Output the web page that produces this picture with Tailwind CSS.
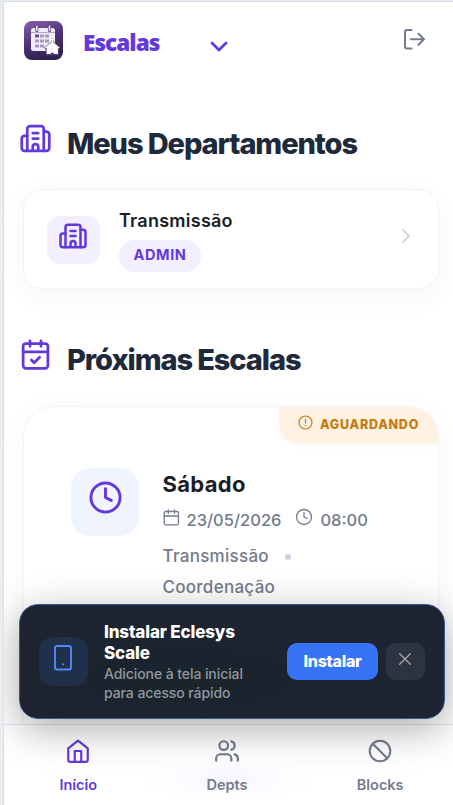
<!DOCTYPE html>
<html lang="pt-BR">
<head>
<meta charset="utf-8">
<meta name="viewport" content="width=device-width, initial-scale=1">
<title>Escalas</title>
<script src="https://cdn.jsdelivr.net/npm/@tailwindcss/browser@4"></script>
</head>
<body class="h-[805px] overflow-hidden bg-[#e8edf3] pt-px pl-[3px] font-['Inter',sans-serif]">
<svg class="hidden">
  <symbol id="building" viewBox="0 0 24 24" fill="none" stroke="currentColor" stroke-width="2" stroke-linecap="round" stroke-linejoin="round"><path d="M10 12h4M10 8h4M14 21v-3a2 2 0 0 0-4 0v3M6 10H4a2 2 0 0 0-2 2v7a2 2 0 0 0 2 2h16a2 2 0 0 0 2-2V9a2 2 0 0 0-2-2h-2"/><path d="M6 21V5a2 2 0 0 1 2-2h8a2 2 0 0 1 2 2v16"/></symbol>
  <symbol id="clock" viewBox="0 0 24 24" fill="none" stroke="currentColor" stroke-linecap="round" stroke-linejoin="round"><circle cx="12" cy="12" r="10"/><path d="M12 6v6l4 2"/></symbol>
</svg>
<div class="relative h-[804px] w-[450px] overflow-hidden border-t border-l border-[#d9dee6] bg-white">
  <header class="flex h-[75px] items-start pt-[19px] pl-5">
    <svg class="size-[39px] shrink-0" viewBox="0 0 39 39">
      <defs><linearGradient id="lg" x1="0" y1="0" x2=".35" y2="1"><stop stop-color="#8961ad"/><stop offset=".48" stop-color="#57387f"/><stop offset="1" stop-color="#30224f"/></linearGradient></defs>
      <rect width="39" height="39" rx="8" fill="url(#lg)"/>
      <rect x="7" y="7" width="24" height="23" rx="2.5" fill="#f1edf8"/>
      <path d="M7 11.5h24" stroke="#a58fc0" stroke-width=".8"/>
      <path d="M12.8 5v4.5M25.5 5v4.5" stroke="#68478c" stroke-width="3.2" stroke-linecap="round"/>
      <path d="M12.8 5.2v4M25.5 5.2v4" stroke="#f1edf8" stroke-width="1.6" stroke-linecap="round"/>
      <g fill="#a99ac2"><path d="M16 13.5h4v3h-4zM21 13.5h4v3h-4zM11 18.5h4v3h-4zM16 18.5h4v3h-4zM21 18.5h4v3h-4zM11 23.5h4v3h-4zM16 23.5h4v3h-4z"/><path d="M11 13.5h4v3h-4z" fill="#684c8e"/></g>
      <path d="M28.3 17v5M20.8 27.5l7.5-6 7.3 6M23 26.5h10.5V33H23z" fill="#fff" stroke="#56407c" stroke-width="2.6"/>
      <path d="M28.3 16.5v6M26.3 18.6h4M21.3 27l7-5.5 6.8 5.5" fill="none" stroke="#fff" stroke-width="1.5"/>
      <path d="M22.7 26.5V33h4v-3.5c0-2.2 3.2-2.2 3.2 0V33h4v-6.5L28.3 22z" fill="#fff"/>
    </svg>
    <div class="ml-[20px] w-[127px] pt-[8px] font-['Noto_Sans',sans-serif] text-[22.5px] leading-[28px] font-black tracking-[-.95px] whitespace-nowrap text-[#6339dc]">Escalas</div>
    <svg class="mt-[20px] h-[12px] w-[18px]" viewBox="0 0 18 12" fill="none" stroke="#6339dc" stroke-width="2.8" stroke-linecap="round" stroke-linejoin="round"><path d="m2 2 7 7 7-7"/></svg>
    <svg class="mt-[8px] ml-[176px] size-[21px]" viewBox="0 0 21 21" fill="none" stroke="#737b8c" stroke-width="2" stroke-linecap="round" stroke-linejoin="round"><path d="M7.5 1H3Q1 1 1 3v14.5q0 2 2 2h4.5M7 10.3h13M14.5 4.8l5.500 5.500-5.500 5.500"/></svg>
  </header>

  <main class="pl-[19px]">
    <h2 class="mt-[48px] -ml-[4px] flex h-[37px] items-center text-[29px] leading-[36px] font-extrabold tracking-[-1.090px] whitespace-nowrap text-[#1e293b]">
      <svg class="-mt-[10px] mr-[14px] size-[33px] text-[#6339dc]"><use href="#building"/></svg>
      <span class="ml-px">Meus Departamentos</span>
    </h2>
    <section class="mt-[27px] flex h-[100px] w-[416px] items-start rounded-[20px] border border-[#f1f2f4] bg-white pl-[22.500px] shadow-[0_8px_30px_rgba(0,0,0,0.045)]">
      <div class="mt-[26px] flex h-[48px] w-[53px] justify-center rounded-[13px] bg-[#f3efff] pt-[5px] text-[#6339dc]"><svg class="size-[30px]"><use href="#building"/></svg></div>
      <div class="mt-[18px] ml-[19.500px] w-[282.500px]">
        <div class="text-[18px] leading-[25px] font-semibold tracking-[.25px] text-[#1b1e28]">Transmissão</div>
        <div class="mt-[7px] flex h-[32px] w-[82px] items-center justify-center rounded-full bg-[#f3efff] pb-[2px] text-[14.500px] font-bold tracking-[.6px] text-[#6339dc]">ADMIN</div>
      </div>
      <svg class="mt-[39px] h-[14px] w-[8px]" viewBox="0 0 8 14" fill="none" stroke="#d3d6dc" stroke-width="1.800" stroke-linecap="round" stroke-linejoin="round"><path d="m1 1 6 6-6 6"/></svg>
    </section>

    <h2 class="mt-[52px] -ml-[4px] flex h-[37px] items-center text-[29px] leading-[36px] font-extrabold tracking-[-1.090px] whitespace-nowrap text-[#1e293b]">
      <svg class="-mt-[10px] mr-[14px] size-[33px]" viewBox="0 0 24 24" fill="none" stroke="#6339dc" stroke-width="2" stroke-linecap="round" stroke-linejoin="round"><path d="M8 2v4M16 2v4M3 10h18m-12 6 2 2 4-4"/><rect x="3" y="4" width="18" height="18" rx="2"/></svg>
      <span class="ml-px">Próximas Escalas</span>
    </h2>
    <section class="mt-[28px] h-[460px] w-[416px] overflow-hidden rounded-[30px] border border-[#f3f4f6] bg-white shadow-[0_4px_30px_rgba(0,0,0,0.035)]">
      <div class="ml-auto flex h-[36px] w-[159px] items-center rounded-bl-[19px] bg-[#fff2e3] pl-[19px] text-[#c77a0c] shadow-[0_2px_8px_rgba(0,0,0,0.03)]">
        <svg class="-mt-[6px] size-[15px]" viewBox="0 0 15 15" fill="none" stroke="currentColor" stroke-width="1.200" stroke-linecap="round"><circle cx="7.500" cy="7.500" r="6.500"/><path d="M7.500 4.500v3.500M7.500 10.300v.1"/></svg>
        <span class="ml-[7px] text-[12.500px] font-extrabold tracking-[.75px]">AGUARDANDO</span>
      </div>
      <div class="flex pt-[25px] pl-[47px]">
        <div class="flex size-[68px] shrink-0 justify-center rounded-[19px] bg-[#eff4ff] pt-[12px] text-[#6339dc]"><svg class="size-[35px]" stroke-width="2"><use href="#clock"/></svg></div>
        <div class="ml-[23.500px] whitespace-nowrap text-[#737b8c]">
          <div class="text-[22px] leading-[32px] font-bold tracking-[.3px] text-[#1b1e28]">Sábado</div>
          <div class="mt-[7px] flex h-[26px] items-center text-[16.500px] font-[450]">
            <svg class="-mt-[6px] h-[17px] w-[17px]" viewBox="0 0 17 17" fill="none" stroke="currentColor" stroke-width="1.300" stroke-linecap="round"><rect x="1.200" y="2.500" width="14.200" height="13.300" rx="1.500"/><path d="M1.200 7h14M5.300 1v3.500M11.500 1v3.500"/></svg>
            <span class="ml-[7px]">23/05/2026</span>
            <svg class="-mt-[6px] ml-[14px] size-[18px]" stroke-width="1.700"><use href="#clock"/></svg>
            <span class="ml-[7px]">08:00</span>
          </div>
          <div class="mt-[10px] flex items-center text-[17px] leading-[26px] font-[450] tracking-[.28px]"><span>Transmissão</span><i class="mt-[2px] ml-[16px] size-[6px] rounded-full bg-[#cbd2e0]"></i></div>
          <div class="mt-[5px] text-[17px] leading-[26px] font-[450] tracking-[.28px]">Coordenação</div>
        </div>
      </div>
    </section>
  </main>

  <nav class="absolute right-0 bottom-0 left-0 grid h-[81px] grid-cols-3 border-t border-[#e5e5f0] bg-[radial-gradient(ellipse_at_50%_68%,#f8f6fe_0%,#ffffff_28%)] pt-[13px] text-[14.500px] font-semibold text-[#737b8c]">
    <a class="flex flex-col items-center pr-px text-[#6339dc]">
      <svg class="size-[26px]" viewBox="0 0 24 24" fill="none" stroke="currentColor" stroke-width="2" stroke-linecap="round" stroke-linejoin="round"><path d="M3 9.500 12 2.500l9 7V20a2 2 0 0 1-2 2H5a2 2 0 0 1-2-2z"/><path d="M9 22V12h6v10"/></svg>
      <span class="mt-[10px] leading-[22px]">Início</span>
    </a>
    <a class="flex flex-col items-center pr-[3px]">
      <svg class="size-[26px]" viewBox="0 0 24 24" fill="none" stroke="currentColor" stroke-width="2" stroke-linecap="round" stroke-linejoin="round"><path d="M16 21v-2a4 4 0 0 0-4-4H6a4 4 0 0 0-4 4v2"/><circle cx="9" cy="7" r="4"/><path d="M22 21v-2a4 4 0 0 0-3-3.870M16 3.130a4 4 0 0 1 0 7.750"/></svg>
      <span class="mt-[10px] leading-[22px]">Depts</span>
    </a>
    <a class="flex flex-col items-center pl-[4px]">
      <svg class="size-[26px]" viewBox="0 0 24 24" fill="none" stroke="currentColor" stroke-width="1.900" stroke-linecap="round"><circle cx="12" cy="12" r="9.500"/><path d="m5.300 5.300 13.400 13.400"/></svg>
      <span class="mt-[10px] leading-[22px]">Blocks</span>
    </a>
  </nav>

  <aside class="absolute top-[602px] left-[15px] flex h-[115px] w-[426px] items-center rounded-[19px] border border-[#3a5890] bg-[radial-gradient(ellipse_at_40%_65%,#19242c_0%,#1e2431_60%)] pl-[19px] shadow-[0_10px_40px_rgba(0,0,0,0.33)]">
    <div class="flex size-[49px] shrink-0 justify-center rounded-[14px] bg-[#20304b] pt-[8px] pr-px"><svg class="h-[26px] w-[18px]" viewBox="0 0 18 26" fill="none" stroke="#4d8bf8" stroke-width="1.900" stroke-linecap="round"><rect x="1" y="1" width="16" height="23.500" rx="2.300"/><path d="M9 19.300v.1"/></svg></div>
    <div class="ml-[16px] w-[183px] whitespace-nowrap">
      <div class="text-[17px] leading-[21px] font-extrabold tracking-[-.15px] text-white">Instalar Eclesys<br>Scale</div>
      <div class="text-[14px] leading-[19px] font-[450] tracking-[-.08px] text-[#92979d]">Adicione à tela inicial<br>para acesso rápido</div>
    </div>
    <button class="h-[37px] w-[91px] rounded-[10px] bg-[#3674f5] pb-px text-[16px] font-extrabold tracking-[-.25px] text-white">Instalar</button>
    <button class="ml-[8px] flex h-[37px] w-[39px] justify-center rounded-[10px] bg-[#2e343f] pt-[10px] pr-px"><svg class="size-[12px]" viewBox="0 0 12 12" stroke="#a5a8ae" stroke-width="1.300" stroke-linecap="round"><path d="m.7.700 10.600 10.600m0-10.600L.7 11.300"/></svg></button>
  </aside>
</div>
</body>
</html>
